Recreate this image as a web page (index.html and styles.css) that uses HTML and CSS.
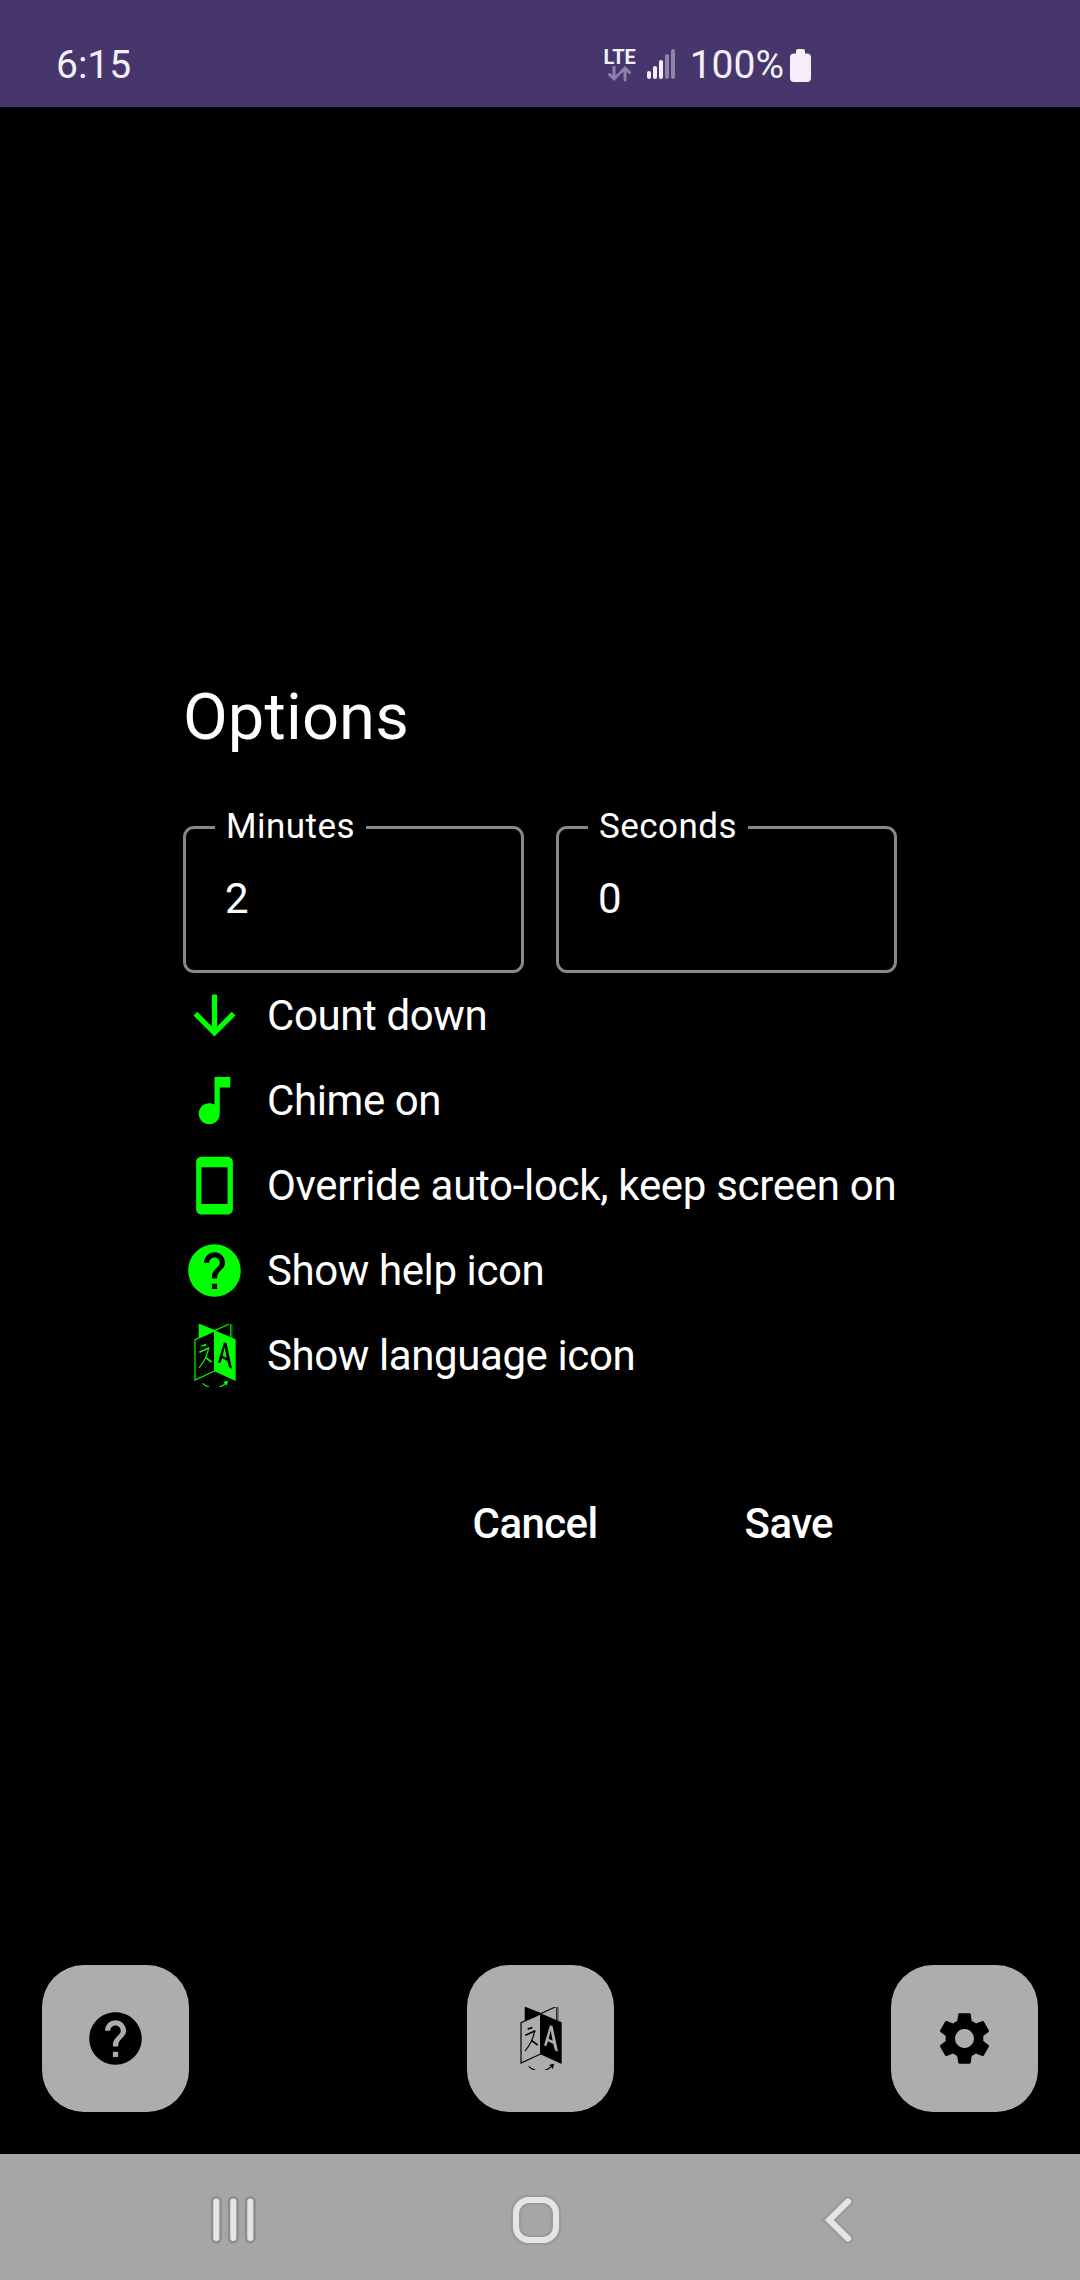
FILE: index.html
```html
<!DOCTYPE html>
<html lang="en">
<head>
<meta charset="utf-8">
<title>Options</title>
<link rel="stylesheet" href="styles.css">
</head>
<body>
<svg class="defs" width="0" height="0">
  <symbol id="help" viewBox="0 0 24 24"><path d="M12 2C6.48 2 2 6.48 2 12s4.480 10 10 10 10-4.480 10-10S17.520 2 12 2zm1 17h-2v-2h2v2zm2.070-7.750l-.9.920C13.450 12.900 13 13.500 13 15h-2v-.5c0-1.100.45-2.100 1.170-2.830l1.240-1.260c.37-.36.59-.86.59-1.410 0-1.100-.9-2-2-2s-2 .9-2 2H8c0-2.210 1.790-4 4-4s4 1.790 4 4c0 .88-.36 1.680-.93 2.250z"/></symbol>
  <symbol id="language" viewBox="0 0 189 189">
    <path d="M47 0 L50 0 L96 18 L96 21 L47 42 Z"/>
    <path class="line" d="M94 20 L139 0"/>
    <path class="line" d="M143.500 0 V41"/>
    <path class="line thin" d="M148 0 V43"/>
    <path class="line" d="M36 47 L95 21 V141 L36 168 Z"/>
    <path fill-rule="evenodd" d="M94 19 L158 46 V171 L94 142 Z M123 55 L105 115 L112 118 L117 103 L133 111 L138 130 L147 134 L131 58 Z M125 70 L131 101 L119 95 Z"/>
    <path class="line bold" d="M56 66 L70 62"/>
    <path class="line bold" d="M49 85 L79 71"/>
    <path class="line" d="M77 71 Q72 103 48 132"/>
    <path class="line bold" d="M68 101 L86 114"/>
    <path class="line" d="M59 178 Q67 186 79 190"/>
    <path class="line" d="M108 190 Q122 185 130 176"/>
    <path d="M121 173 L135 170 L132 186 Z"/>
  </symbol>
</svg>

<header class="status">
  <span class="clock">6:15</span>
  <div class="indicators">
    <div class="network">
      <span class="lte">LTE</span>
      <svg class="traffic" width="24" height="16" viewBox="0 0 24 16"><path d="M6 1v12M1.500 8.500L6 13l4.500-4.500M17 14V2M12.500 6.500L17 2l4.500 4.500"/></svg>
    </div>
    <svg class="signal" width="29" height="30" viewBox="0 0 29 30"><path d="M2 24v4M8 19v9M14 13v15"/><path class="off" d="M20 7v21M26 2v26"/></svg>
    <span class="percent">100%</span>
    <svg class="battery" width="21" height="33" viewBox="0 0 21 33"><path d="M8 0h5q2 0 2 2v2.500h2q4 0 4 4V29q0 4-4 4H4q-4 0-4-4V8.500q0-4 4-4h2V2q0-2 2-2z"/></svg>
  </div>
</header>

<main class="dialog">
  <h1 class="title">Options</h1>
  <div class="fields">
    <fieldset class="field"><legend>Minutes</legend><div class="value">2</div></fieldset>
    <fieldset class="field"><legend>Seconds</legend><div class="value">0</div></fieldset>
  </div>
  <ul class="options">
    <li><svg class="icon" viewBox="0 0 24 24"><path d="M20 12l-1.410-1.410L13 16.170V4h-2v12.170l-5.580-5.590L4 12l8 8 8-8z"/></svg><span>Count down</span></li>
    <li><svg class="icon" viewBox="0 0 24 24"><path d="M12 3v10.550c-.59-.34-1.270-.55-2-.55-2.210 0-4 1.790-4 4s1.790 4 4 4 4-1.790 4-4V7h4V3h-6z"/></svg><span>Chime on</span></li>
    <li><svg class="icon" viewBox="0 0 24 24"><path d="M17 1.010L7 1c-1.100 0-1.990.9-1.990 2v18c0 1.100.89 2 1.990 2h10c1.100 0 2-.9 2-2V3c0-1.100-.9-1.990-2-1.990zM17 19H7V5h10v14z"/></svg><span class="long">Override auto-lock, keep screen on</span></li>
    <li><svg class="icon"><use href="#help"/></svg><span>Show help icon</span></li>
    <li><svg class="icon"><use href="#language"/></svg><span>Show language icon</span></li>
  </ul>
  <div class="actions"><button>Cancel</button><button>Save</button></div>
</main>

<footer class="toolbar">
  <button class="fab"><svg class="icon"><use href="#help"/></svg></button>
  <button class="fab"><svg class="icon"><use href="#language"/></svg></button>
  <button class="fab"><svg class="icon" viewBox="0 0 24 24"><path d="M19.140 12.940c.04-.3.06-.61.06-.94 0-.32-.02-.64-.07-.94l2.030-1.580c.18-.14.23-.41.12-.61l-1.920-3.320c-.12-.22-.37-.29-.59-.22l-2.390.96c-.5-.38-1.030-.7-1.620-.94l-.36-2.540c-.04-.24-.24-.41-.48-.41h-3.840c-.24 0-.43.17-.47.41l-.36 2.540c-.59.24-1.130.57-1.620.94l-2.390-.96c-.22-.08-.47 0-.59.22L2.740 8.870c-.12.21-.08.47.12.61l2.030 1.580c-.05.3-.09.63-.09.94s.02.64.07.94l-2.030 1.580c-.18.14-.23.41-.12.61l1.920 3.320c.12.22.37.29.59.22l2.390-.96c.5.38 1.030.7 1.620.94l.36 2.540c.05.24.24.41.48.41h3.840c.24 0 .44-.17.47-.41l.36-2.540c.59-.24 1.130-.56 1.620-.94l2.390.96c.22.08.47 0 .59-.22l1.920-3.320c.12-.22.07-.47-.12-.61l-2.010-1.580zM12 15.600c-1.980 0-3.600-1.620-3.600-3.600s1.620-3.600 3.600-3.600 3.600 1.620 3.600 3.600-1.620 3.600-3.600 3.600z"/></svg></button>
</footer>

<nav class="navbar">
  <svg width="50" height="54" viewBox="0 0 50 54"><path class="edge dark" d="M8.300 8.500V45M25.300 8.500V45M42.300 8.500V45"/><path class="stroke" d="M8.300 8.500V45M25.300 8.500V45M42.300 8.500V45"/></svg>
  <svg class="home" width="54" height="54" viewBox="0 0 54 54"><rect class="edge" x="7" y="7" width="40" height="40" rx="13"/><rect class="stroke" x="7" y="7" width="40" height="40" rx="13"/></svg>
  <svg width="34" height="54" viewBox="0 0 34 54"><path class="edge" d="M27 8.500L8.200 27 27 45.500"/><path class="stroke" d="M27 8.500L8.200 27 27 45.500"/></svg>
</nav>
</body>
</html>
```
FILE: styles.css
```css
* { box-sizing: border-box; }

body {
  margin: 0;
  width: 1080px;
  height: 2280px;
  display: flex;
  flex-direction: column;
  background: #000;
  color: #fff;
  font-family: Roboto, sans-serif;
}

button {
  margin: 0;
  padding: 0;
  border: 0;
  background: none;
  color: inherit;
  font: inherit;
  letter-spacing: inherit;
}

.defs { display: none; }

.icon {
  display: block;
  flex: none;
  width: 63px;
  height: 63px;
  fill: currentColor;
}

.line {
  fill: none;
  stroke: currentColor;
  stroke-width: 3.5px;
}

.line.bold { stroke-width: 5px; }
.line.thin { stroke-width: 1px; }

/* Status bar */
.status {
  height: 107px;
  padding: 23px 269px 0 56px;
  display: flex;
  justify-content: space-between;
  background: #46366b;
  color: #f2eff9;
  font-size: 39px;
  line-height: 85px;
}

.indicators {
  display: flex;
  align-items: flex-start;
}

.network {
  width: 32px;
  margin-top: 24px;
  display: flex;
  flex-direction: column;
  align-items: center;
}

.lte {
  font-size: 20px;
  font-weight: 700;
  line-height: 20px;
}

.traffic {
  margin-top: -1px;
  fill: none;
  stroke: #8d82aa;
  stroke-width: 3;
  stroke-linecap: round;
}

.signal {
  margin: 26px 14px 0 11px;
  fill: none;
  stroke: #f2eff9;
  stroke-width: 4;
  stroke-linecap: round;
}

.signal .off { stroke: #8d82aa; }

.battery {
  margin: 26px 0 0 6px;
  fill: #f2eff9;
}

/* Options dialog */
.dialog {
  flex: 1;
  width: 714px;
  margin-left: 183px;
  padding-top: 570px;
}

.title {
  margin: 0;
  font-size: 65px;
  font-weight: 400;
  line-height: 80px;
  letter-spacing: 0.15px;
}

.fields {
  margin-top: 49px;
  display: flex;
  gap: 32px;
}

.field {
  flex: 1;
  min-width: 0;
  height: 167px;
  margin: 0;
  padding: 0;
  border: 3px solid #888;
  border-radius: 11px;
}

.field legend {
  margin-left: 29px;
  padding: 0 11.5px 0 11px;
  font-size: 35px;
  line-height: 42px;
  letter-spacing: 0.45px;
}

.value {
  padding: 26px 0 0 39px;
  font-size: 42px;
  line-height: 50px;
}

.options {
  margin: 0;
  padding: 0;
  list-style: none;
}

.options li {
  height: 85px;
  display: flex;
  align-items: center;
  gap: 21px;
  white-space: nowrap;
}

.options .icon { color: #0f0; }

.options span {
  font-size: 42px;
  line-height: 50px;
  letter-spacing: -0.4px;
}

.options .long { letter-spacing: -0.3px; }

.actions {
  margin-top: 101px;
  padding-right: 64px;
  display: flex;
  justify-content: flex-end;
  gap: 147px;
  font-size: 42px;
  font-weight: 500;
  line-height: 50px;
  letter-spacing: -0.6px;
}

/* Floating buttons */
.toolbar {
  height: 189px;
  padding: 0 42px;
  display: flex;
  justify-content: space-between;
}

.fab {
  width: 147px;
  height: 147px;
  display: grid;
  place-items: center;
  border-radius: 42px;
  background: #adadad;
  color: #000;
}

/* System navigation */
.navbar {
  height: 126px;
  padding: 39px 225px 0 208px;
  display: flex;
  align-items: flex-start;
  background: #a6a6a6;
}

.navbar svg { fill: none; stroke-linecap: round; }
.home { margin: 0 258px 0 251px; }
.edge { stroke: #9b9b9b; stroke-width: 11; }
.edge.dark { stroke: #8e8e8e; }
.stroke { stroke: #e5e5e5; stroke-width: 6; }
```
